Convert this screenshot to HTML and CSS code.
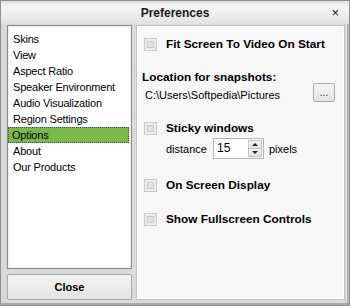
FILE: index.html
```html
<!DOCTYPE html>
<html lang="en">
<head>
    <meta charset="UTF-8">
    <title>Preferences</title>
    <link rel="stylesheet" href="styles.css">
</head>
<body>
<div class="window">
    <div class="titlebar">
        <span></span>
        <span class="title">Preferences</span>
        <span class="close-x">&times;</span>
    </div>
    <div class="content">
        <div class="sidebar">
            <ul class="menu">
                <li>Skins</li>
                <li>View</li>
                <li>Aspect Ratio</li>
                <li>Speaker Environment</li>
                <li>Audio Visualization</li>
                <li>Region Settings</li>
                <li class="selected">Options</li>
                <li>About</li>
                <li>Our Products</li>
            </ul>
            <button class="close-btn">Close</button>
        </div>
        <div class="panel">
            <div class="check-row first">
                <span class="checkbox"></span>
                <span class="label">Fit Screen To Video On Start</span>
            </div>
            <div class="section-label">Location for snapshots:</div>
            <div class="path-row">
                <span class="path">C:\Users\Softpedia\Pictures</span>
                <button class="browse">...</button>
            </div>
            <div class="check-row sticky">
                <span class="checkbox"></span>
                <span class="label">Sticky windows</span>
            </div>
            <div class="distance-row">
                <span>distance</span>
                <div class="spin">
                    <span class="spin-value">15</span>
                    <div class="spin-buttons">
                        <span class="arrow up"></span>
                        <span class="arrow down"></span>
                    </div>
                </div>
                <span>pixels</span>
            </div>
            <div class="check-row">
                <span class="checkbox"></span>
                <span class="label">On Screen Display</span>
            </div>
            <div class="check-row">
                <span class="checkbox"></span>
                <span class="label">Show Fullscreen Controls</span>
            </div>
        </div>
    </div>
</div>
</body>
</html>
```

FILE: styles.css
```css
* {
    margin: 0;
    padding: 0;
    box-sizing: border-box;
    font-family: 'Liberation Sans', Arial, sans-serif;
}

body {
    width: 350px;
    height: 306px;
    background: #d9d9d9;
    color: #000;
    font-size: 11px;
}

.window {
    width: 350px;
    height: 306px;
    display: flex;
    flex-direction: column;
    border: 1px solid #8f8f8f;
    background: #dadada;
    box-shadow: inset 0 -2px 0 #a9a9a9, inset -2px 0 0 #b4b4b4;
}

.titlebar {
    height: 23px;
    display: grid;
    grid-template-columns: 1fr auto 1fr;
    align-items: center;
    background: linear-gradient(#dcdcdc 0, #f4f4f4 5px, #f2f2f2 9px, #e2e2e2 23px);
}

.title {
    font-size: 12px;
    font-weight: bold;
    color: #1a1a1a;
}

.close-x {
    justify-self: end;
    margin-right: 10px;
    font-size: 13px;
    color: #111;
    line-height: 1;
}

.content {
    flex: 1;
    display: flex;
    gap: 4px;
    padding: 1px 4px 5px 6px;
}

.sidebar {
    width: 125px;
    display: flex;
    flex-direction: column;
    gap: 5px;
}

.menu {
    list-style: none;
    height: 244px;
    background: #fff;
    border: 1px solid #8a8a8a;
    box-shadow: inset 0 0 0 1px #f0f0f0;
    padding: 5px 2px 0 0;
}

.menu li {
    height: 16px;
    line-height: 16px;
    padding-left: 4px;
    border: 1px solid transparent;
    border-width: 0 1px;
    white-space: nowrap;
    letter-spacing: -0.2px;
}

.menu li.selected {
    background: #7bb84a;
    border: 1px dotted #4b4b7a;
    line-height: 14px;
    padding-left: 3px;
}

.close-btn {
    height: 26px;
    border: 1px solid #a8a8a8;
    border-radius: 2px;
    background: linear-gradient(#f4f4f4, #e3e3e3);
    font-size: 11px;
    font-weight: bold;
    color: #000;
}

.panel {
    flex: 1;
    display: flex;
    flex-direction: column;
    background: #f7f7f7;
    border: 1px solid #c2c2c2;
    box-shadow: inset 0 0 0 1px #fff;
    padding: 0 9px 0 5px;
}

.check-row {
    display: flex;
    align-items: center;
    gap: 9px;
    height: 16px;
    margin-top: 18px;
    padding-left: 2px;
}

.check-row.first {
    margin-top: 10px;
}

.label {
    font-weight: bold;
    font-size: 11.8px;
}

.checkbox {
    width: 13px;
    height: 13px;
    display: flex;
    align-items: center;
    justify-content: center;
    border: 1px solid #cbcbcb;
    background: #ececec;
}

.checkbox::after {
    content: '';
    width: 5px;
    height: 5px;
    border: 1px solid #cdcdcd;
    background: #e2e2e2;
}

.section-label {
    margin-top: 18px;
    height: 14px;
    line-height: 14px;
    font-weight: bold;
    font-size: 11.8px;
}

.path-row {
    display: flex;
    justify-content: space-between;
    height: 19px;
    margin-top: -1px;
    padding-left: 3px;
}

.path {
    margin-top: 4px;
    line-height: 16px;
}

.browse {
    width: 22px;
    height: 19px;
    border: 1px solid #adadad;
    border-radius: 2px;
    background: linear-gradient(#f5f5f5, #e4e4e4);
    font-size: 10px;
    color: #333;
    line-height: 10px;
}

.distance-row {
    display: flex;
    align-items: center;
    height: 21px;
    margin-top: 2px;
    padding-left: 24px;
    gap: 6px;
}

.spin {
    width: 51px;
    height: 21px;
    display: flex;
    border: 1px solid #b5b5b5;
    background: #fff;
    margin-right: -1px;
}

.spin-value {
    flex: 1;
    padding-left: 3px;
    line-height: 19px;
    font-size: 12px;
}

.spin-buttons {
    width: 14px;
    display: flex;
    flex-direction: column;
    margin: 1px 1px 1px 0;
}

.arrow {
    flex: 1;
    display: flex;
    align-items: center;
    justify-content: center;
    background: linear-gradient(#f3f3f3, #e2e2e2);
    border: 1px solid #c4c4c4;
}

.arrow.down {
    border-top: none;
}

.arrow.up::after {
    content: '';
    border-left: 3px solid transparent;
    border-right: 3px solid transparent;
    border-bottom: 3px solid #222;
}

.arrow.down::after {
    content: '';
    border-left: 3px solid transparent;
    border-right: 3px solid transparent;
    border-top: 3px solid #222;
}
```
